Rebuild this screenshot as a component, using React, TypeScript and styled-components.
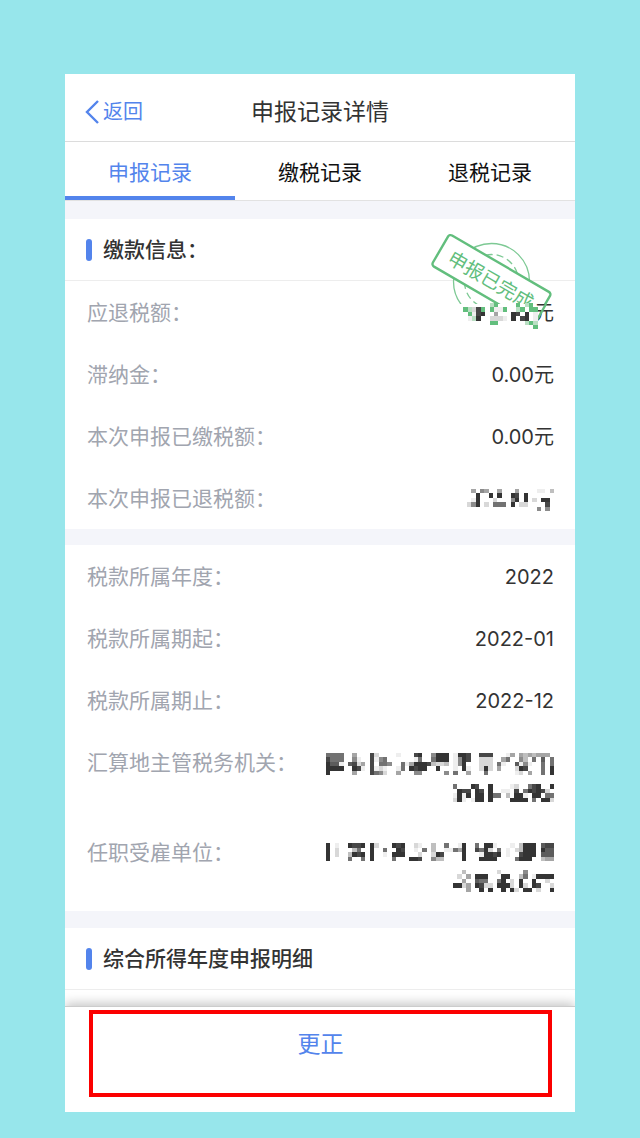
import React from 'react';
import styled, { createGlobalStyle } from 'styled-components';

const GlobalStyle = createGlobalStyle`
  * { box-sizing: border-box; }
  body {
    margin: 0;
    background: #97e6eb;
    font-family: Inter, "Noto Sans CJK SC", sans-serif;
    color: #333;
  }
  button { font-family: inherit; background: none; border: 0; padding: 0; cursor: pointer; }
`;

const Page = styled.div`
  padding: 74px 65px 26px;
`;

const Phone = styled.main`
  background: #fff;
`;

const Header = styled.header`
  display: grid;
  grid-template-columns: 1fr auto 1fr;
  align-items: center;
  height: 68px;
  padding: 8px 20px 0;
  border-bottom: 1px solid #dcdcdc;
`;

const BackButton = styled.button`
  display: flex;
  align-items: center;
  justify-self: start;
  gap: 4px;
  font-size: 20px;
  line-height: 28px;
  color: #5384ec;
`;

const Title = styled.h1`
  margin: 0;
  font-size: 23px;
  font-weight: 400;
  line-height: 32px;
`;

const Tabs = styled.nav`
  display: grid;
  grid-template-columns: repeat(3, 1fr);
  height: 59px;
  border-bottom: 1px solid #e2e2e2;
`;

const Tab = styled.button<{ $active?: boolean }>`
  font-size: 21px;
  line-height: 28px;
  padding-top: 8px;
  color: ${(p) => (p.$active ? '#5384ec' : '#111')};
  border-bottom: 4px solid ${(p) => (p.$active ? '#5384ec' : 'transparent')};
`;

const Gap = styled.div<{ $size?: number }>`
  height: ${(p) => p.$size ?? 17}px;
  background: #f4f5fa;
`;

const Section = styled.section`
  position: relative;
`;

const SectionTitle = styled.h2`
  display: flex;
  align-items: center;
  gap: 11px;
  height: 62px;
  margin: 0;
  padding: 1px 21px 0;
  font-size: 21px;
  font-weight: 500;
  line-height: 28px;
  border-bottom: 1px solid #ededed;

  &::before {
    content: '';
    width: 6px;
    height: 22px;
    border-radius: 3px;
    background: #5384ec;
  }
`;

const List = styled.dl`
  margin: 0;
`;

const Row = styled.div`
  display: flex;
  justify-content: space-between;
  padding: 18px 21px 16px 22px;
  line-height: 28px;
`;

const Label = styled.dt`
  font-size: 21px;
  font-weight: 400;
  color: #a1a5af;
`;

const Value = styled.dd`
  display: flex;
  flex-direction: column;
  align-items: flex-end;
  margin: 0;
  font-size: 20px;
`;

const MaskedLines = styled.div<{ $lines: number }>`
  display: flex;
  flex-direction: column;
  align-items: flex-end;
  gap: 9px;
  height: ${(p) => p.$lines * 28}px;
  padding-top: 4px;
`;

const MosaicSvg = styled.svg`
  display: block;
`;

const Stamp = styled.svg`
  position: absolute;
  top: 6px;
  right: 20px;
`;

const Footer = styled.footer`
  height: 106px;
  margin-top: 16px;
  padding: 3px 23px 0 24px;
  border-top: 1px solid #ccc;
  box-shadow: 0 -3px 10px rgba(0, 0, 0, 0.22);
  clip-path: inset(-16px 0 0 0);
  background: #fff;
`;

const CorrectButton = styled.button`
  && {
    display: flex;
    justify-content: center;
    align-items: flex-start;
    width: 100%;
    height: 87px;
    padding-top: 14px;
    border: 4px solid #fb0000;
    font-size: 23px;
    line-height: 32px;
    color: #5384ec;
  }
`;

const CELL_COLORS: Record<string, string> = {
  '1': '#eeeeee', '2': '#d8d8d8', '3': '#bfbfbf', '4': '#a5a5a5', '5': '#8b8b8b',
  '6': '#727272', '7': '#5c5c5c', '8': '#474747', '9': '#343434',
  g: '#62be7d', h: '#b9dfc3',
};

function Cells({ rows }: { rows: string[] }) {
  return (
    <g shapeRendering="crispEdges">
      {rows.flatMap((row, y) =>
        [...row].map((c, x) =>
          CELL_COLORS[c] ? (
            <rect key={`${x}-${y}`} x={x} y={y} width={1} height={1} fill={CELL_COLORS[c]} />
          ) : null,
        ),
      )}
    </g>
  );
}

function Mosaic({ rows, width, height }: { rows: string[]; width: number; height: number }) {
  return (
    <MosaicSvg
      width={width}
      height={height}
      viewBox={`0 0 ${rows[0].length} ${rows.length}`}
      preserveAspectRatio="none"
      aria-hidden="true"
    >
      <Cells rows={rows} />
    </MosaicSvg>
  );
}

const STAMP_MASK = [
  '......hg....g.hg.',
  'gh28g.g11g..hg.gg',
  '.g189..4...98.9.1',
  '.1h9..2221.9.89.1',
  '......gg......hgh',
  '................g',
];

const REFUND_MASK = [
  '.4.54..4...4....11.3',
  '..9..9.9..98.9......',
  '.19...2...59.9.2.99.',
  '259.2.666.9.22....8.',
  '................5.5.',
];

const OFFICE_MASK_1 = [
  '6666..4...82....1...89..5999.1998..888...14.4343444.',
  '8666..51..8156......16..6999.1598..222..46..53.6.7.6',
  '9771.7824.8.665..61499983223.159...222.61..7151..6.6',
  '9999..981.8121..16.9899..9...1.91..292.4...298...6.9',
  '9.....4...8652..4...55.....5.6..4...6......12.4..6.9',
];

const OFFICE_MASK_2 = [
  '6...98..9....12..689..9',
  '.988.98.9..11.8.698982.',
  '1919.99.966.3.991.99.66',
  '291.199.9....9999.6.992',
];

const EMPLOYER_MASK_1 = [
  '9.1..9889.92...989..21..3..6..19..6.991...1.3999.788',
  '9.2...36..9..6..98..1.6.3..11649..8692.6.1.23999.977',
  '9.2..3989.9..1.999...2..298....9...19989.1..8999.777',
  '9....6..6.9....6...998..533....9...9999....6999..344',
];

const EMPLOYER_MASK_2 = [
  '..3.......2.....5......',
  '.2.4.999...99..36.19999',
  '..4..766..69.2.9..9..2.',
  '9924.9822.9992.92.98..2',
  '...4..9.9..9.92.99.2..9',
];

function CompletedStamp() {
  return (
    <Stamp width="130" height="110" viewBox="425 225 130 110" role="img" aria-label="申报已完成">
      <defs>
        <clipPath id="stamp-visible">
          <path d="M425 225H555V304H425Z" />
        </clipPath>
      </defs>
      <g clipPath="url(#stamp-visible)">
        <circle cx="491.500" cy="281.500" r="38" fill="none" stroke="#7dc994" strokeWidth="1.300" />
        <circle cx="491.500" cy="281.500" r="27" fill="none" stroke="#7dc994" strokeWidth="1.300" strokeDasharray="7 4" />
        <g transform="translate(449.500 234) rotate(30.200)">
          <rect x="0" y="0" width="118" height="36" rx="3" fill="#fff" stroke="#62be7d" strokeWidth="2.400" />
          <text x="59" y="26" textAnchor="middle" fontSize="19" fill="#62be7d">申报已完成</text>
        </g>
      </g>
      <path d="M546 304L537 320" stroke="#62be7d" strokeWidth="2.400" />
      <g transform="translate(463.300 303) scale(4.380)">
        <Cells rows={STAMP_MASK} />
      </g>
    </Stamp>
  );
}

function Field({ label, children }: { label: string; children: React.ReactNode }) {
  return (
    <Row>
      <Label>{label}</Label>
      <Value>{children}</Value>
    </Row>
  );
}

export default function App() {
  return (
    <>
      <GlobalStyle />
      <Page lang="zh-CN">
        <Phone>
          <Header>
            <BackButton type="button">
              <svg width="14" height="24" viewBox="0 0 14 24" fill="none" stroke="#5384ec" strokeWidth="2.400" aria-hidden="true">
                <path d="M13 1L2 12l11 11" />
              </svg>
              返回
            </BackButton>
            <Title>申报记录详情</Title>
          </Header>
          <Tabs>
            <Tab type="button" $active>申报记录</Tab>
            <Tab type="button">缴税记录</Tab>
            <Tab type="button">退税记录</Tab>
          </Tabs>
          <Gap $size={18} />
          <Section>
            <SectionTitle>缴款信息：</SectionTitle>
            <List>
              <Field label="应退税额：">元</Field>
              <Field label="滞纳金：">0.00元</Field>
              <Field label="本次申报已缴税额：">0.00元</Field>
              <Field label="本次申报已退税额：">
                <MaskedLines $lines={1}>
                  <Mosaic rows={REFUND_MASK} width={87} height={22} />
                </MaskedLines>
              </Field>
            </List>
            <CompletedStamp />
          </Section>
          <Gap $size={16} />
          <List>
            <Field label="税款所属年度：">2022</Field>
            <Field label="税款所属期起：">2022-01</Field>
            <Field label="税款所属期止：">2022-12</Field>
            <Field label="汇算地主管税务机关：">
              <MaskedLines $lines={2}>
                <Mosaic rows={OFFICE_MASK_1} width={228} height={22} />
                <Mosaic rows={OFFICE_MASK_2} width={101} height={18} />
              </MaskedLines>
            </Field>
            <Field label="任职受雇单位：">
              <MaskedLines $lines={2}>
                <Mosaic rows={EMPLOYER_MASK_1} width={228} height={18} />
                <Mosaic rows={EMPLOYER_MASK_2} width={101} height={22} />
              </MaskedLines>
            </Field>
          </List>
          <Gap />
          <SectionTitle>综合所得年度申报明细</SectionTitle>
          <Footer>
            <CorrectButton type="button">更正</CorrectButton>
          </Footer>
        </Phone>
      </Page>
    </>
  );
}
